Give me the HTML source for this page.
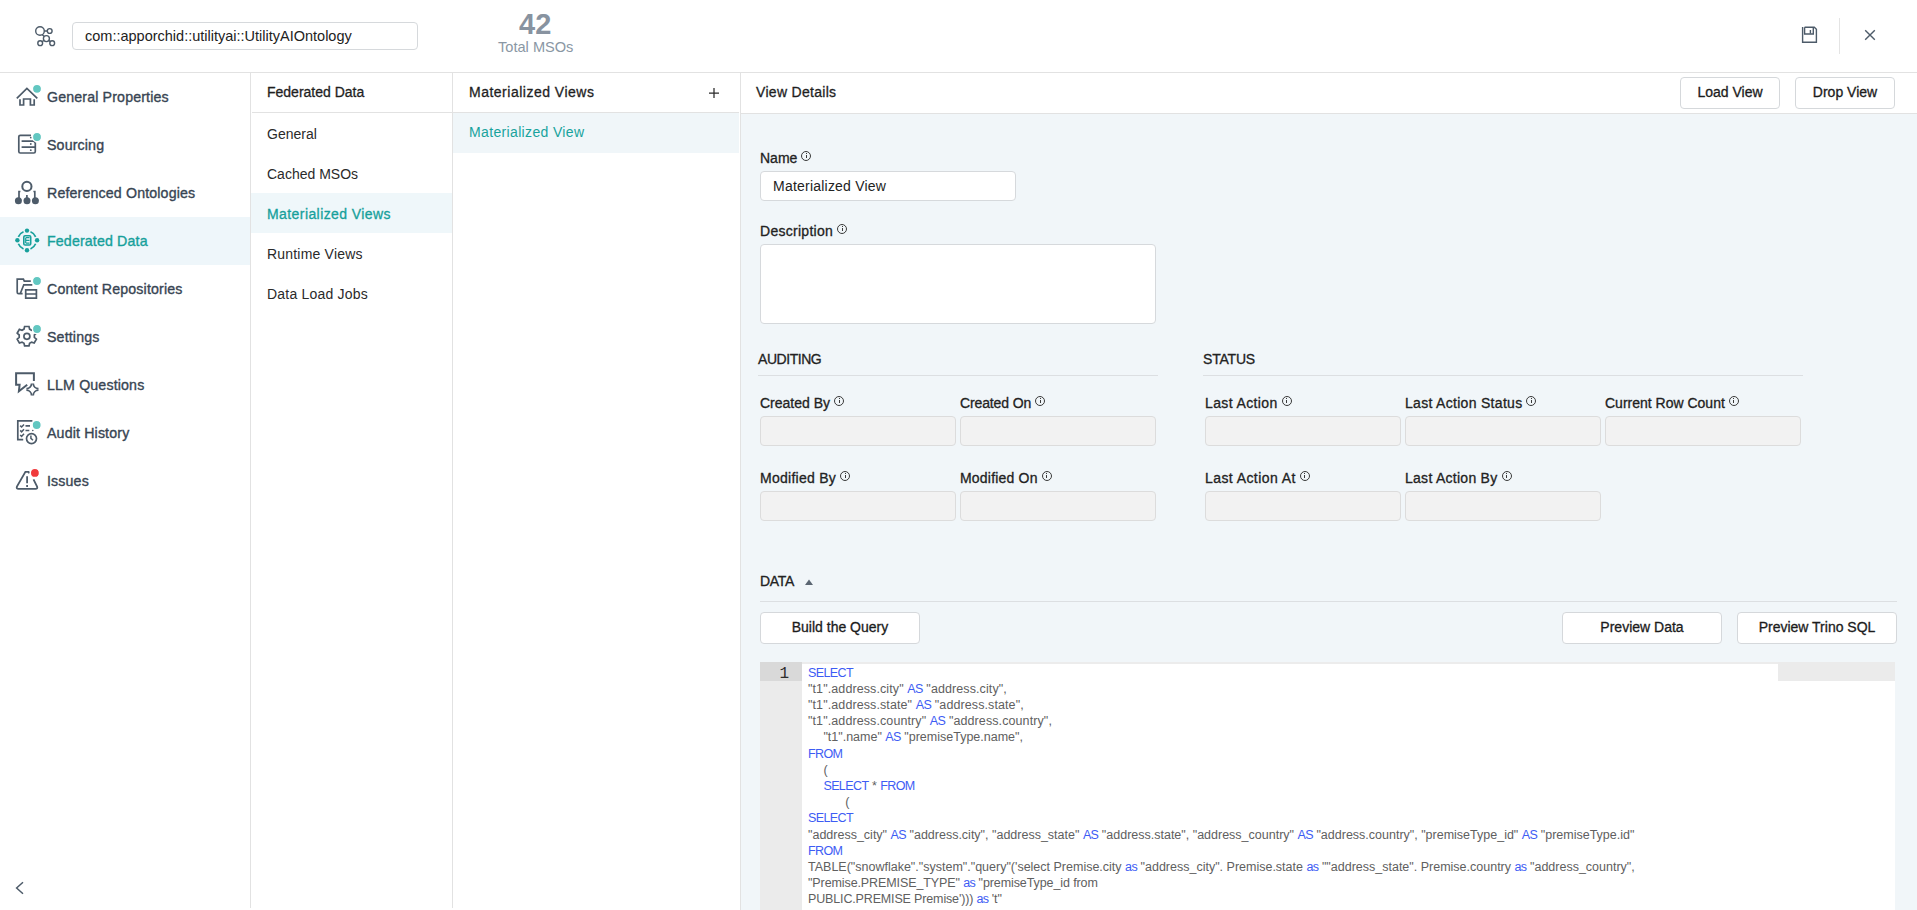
<!DOCTYPE html>
<html><head><meta charset="utf-8">
<style>
html,body{margin:0;padding:0;width:1917px;height:910px;overflow:hidden;background:#fff;font-family:"Liberation Sans",sans-serif;}
.a{position:absolute;}
.t{position:absolute;white-space:nowrap;line-height:20px;font-size:14px;}
.hl{position:absolute;height:1px;background:#e2e2e2;}
.vl{position:absolute;width:1px;background:#e2e2e2;}
.sb{letter-spacing:0.15px;color:#384553;-webkit-text-stroke:0.35px #384553;}
.c2{color:#2a2a2a;}
.hd{color:#1f1f1f;-webkit-text-stroke:0.3px #1f1f1f;}
.lbl{color:#222;-webkit-text-stroke:0.3px #222;}
.inp{position:absolute;box-sizing:border-box;border:1px solid #d6d9dc;border-radius:4px;background:#fff;}
.dis{position:absolute;box-sizing:border-box;border:1px solid #dcdcdc;border-radius:4px;background:#f2f2f2;height:30px;width:196px;}
.btn{position:absolute;box-sizing:border-box;border:1px solid #d5d8db;border-radius:4px;background:#fff;height:32px;text-align:center;line-height:29px;font-size:14px;color:#1c1c1c;-webkit-text-stroke:0.3px #1c1c1c;}
.info{display:inline-block;position:relative;width:8px;height:8px;border:1px solid #3a3a3a;border-radius:50%;margin-left:4px;top:-2.5px;-webkit-text-stroke:0;}
.info:after{content:"";position:absolute;left:3.5px;top:3.2px;width:1px;height:3.3px;background:#3a3a3a;}
.info:before{content:"";position:absolute;left:3.5px;top:1.5px;width:1px;height:1px;background:#3a3a3a;}
.code{font-size:12.5px;line-height:16.21px;color:#606060;}
.code div{white-space:pre;height:16.21px;}
.code b{font-weight:normal;color:#3d5cf4;letter-spacing:-0.6px;}
</style></head><body>

<!-- HEADER -->
<svg class="a" style="left:30px;top:22px" width="30" height="30" viewBox="30 22 30 30">
 <g fill="none" stroke="#4d5b69" stroke-width="1.4">
  <circle cx="40" cy="31" r="4.3"/>
  <circle cx="49.7" cy="31" r="2.4"/>
  <circle cx="46.4" cy="38.6" r="3"/>
  <circle cx="40.2" cy="43.2" r="2.4"/>
  <circle cx="52.2" cy="43.2" r="2.4"/>
  <path d="M44.3 31H47.3M42.3 34.8L44.3 36.6M44 40.5L42 41.7M48.7 40.4L50.4 41.6"/>
 </g>
</svg>
<div class="inp" style="left:72px;top:22px;width:346px;height:28px;"></div>
<div class="t" style="left:85px;top:26px;font-size:14.5px;color:#222;">com::apporchid::utilityai::UtilityAIOntology</div>
<div class="t" style="left:519px;top:8px;font-size:29px;line-height:32px;font-weight:bold;color:#8893a0;">42</div>
<div class="t" style="left:498px;top:37px;font-size:14.6px;color:#8a97a4;">Total MSOs</div>
<svg class="a" style="left:1799px;top:25px" width="20" height="20" viewBox="0 0 20 20">
 <g fill="none" stroke="#4d5b69" stroke-width="1.4">
  <path d="M3.6 2V17.3H17.4V4.3L15.3 2.2H5.6"/>
  <path d="M5.6 2.2V9H14.3V2.2"/>
  <path d="M11.4 5V8.6"/>
 </g>
</svg>
<div class="vl" style="left:1839px;top:18px;height:36px;background:#e4e4e4;"></div>
<svg class="a" style="left:1862px;top:27px" width="16" height="16" viewBox="0 0 16 16">
 <path d="M3.2 3.2L12.8 12.8M12.8 3.2L3.2 12.8" stroke="#4d5b69" stroke-width="1.4" fill="none"/>
</svg>
<div class="hl" style="left:0;top:72px;width:1917px;"></div>

<!-- SIDEBAR -->
<div class="a" style="left:0;top:217px;width:250px;height:48px;background:#eef6fa;"></div>
<svg class="a" style="left:0;top:73px" width="250" height="837" viewBox="0 73 250 837">
 <g fill="none" stroke="#4d5b69" stroke-width="1.7" stroke-linejoin="miter">
  <!-- house -->
  <path d="M16.8 98.3L26.9 88.4L37.3 98.3"/>
  <path d="M20 99.3V105H23.6V99H30.4V105H34.2V99.3"/>
  <!-- sourcing -->
  <path d="M31 135.3H20.3Q18.8 135.3 18.8 136.8V151.5Q18.8 153 20.3 153H33.8Q35.3 153 35.3 151.5V142.5"/>
  <path d="M21.6 141.1H33.5L35.3 142.5M21.6 147.2H35.3"/>
  <!-- ref ontologies -->
  <circle cx="26.9" cy="186.4" r="4.6" stroke-width="2"/>
  <path d="M20.4 191.5H19V198.2M33.4 191.5H34.8V198.2M26.9 195V198.2"/>
  <!-- content repos -->
  <path d="M22.6 293.7H18.6Q17.2 293.7 17.2 292.3V279.2H23.4L24.3 281.2H30.8"/>
  <path d="M32.3 284.8H23.8L20.3 293.5"/>
  <path d="M25.7 289.8H36.4V298.1H25.7ZM25.7 294H36.4"/>
  <!-- settings gear -->
  <path d="M24.6 326.5h4.4l0.6 2.6 2 1.2 2.6-0.9 2.2 3.8-2 1.8v2.4l2 1.8-2.2 3.8-2.6-0.9-2 1.2-0.6 2.6h-4.4l-0.6-2.6-2-1.2-2.6 0.9-2.2-3.8 2-1.8v-2.4l-2-1.8 2.2-3.8 2.6 0.9 2-1.2z"/>
  <circle cx="26.9" cy="336.3" r="3"/>
  <!-- llm -->
  <path d="M33.9 381V373.3H16.1V384.8H19.6L18.9 391.2L27.2 384.8" stroke-width="2"/>
  <path d="M26.4 388.6A5.4 5.4 0 0 0 31.6 383.5M33.2 383.5A5.4 5.4 0 0 0 38.5 388.6M38.5 390.2A5.4 5.4 0 0 0 33.2 395.5M31.6 395.5A5.4 5.4 0 0 0 26.4 390.2" stroke-width="1.8"/>
  <!-- audit -->
  <path d="M23.2 439.7H17.8V420.9H32.4"/>
  <path d="M20.2 425.6l1.4 1.4 2.4-2.6M20.2 430.4l1.4 1.4 2.4-2.6M20.2 435l1.4 1.4 2.4-2.6" stroke-width="1.5"/>
  <path d="M25.5 425.9H30M25.5 430.5H29.3" stroke-width="1.6"/>
  <circle cx="31.5" cy="438.6" r="5"/>
  <path d="M30.9 435.6V438.4L33 440.3" stroke-width="1.5"/>
  <!-- issues -->
  <path d="M29.2 473.3L28.6 471.8H25.4L16.9 486.6Q16.1 488.8 18.4 488.8H35.6Q37.9 488.8 37.1 486.6L33.5 479.3" stroke-width="1.8"/>
  <path d="M27.1 476.2V483.2M27.1 485.1V487" stroke-width="1.8"/>
  <!-- collapse -->
  <path d="M23 882.2L16.6 888L23 893.8" stroke-width="1.5"/>
 </g>
 <g fill="#4d5b69">
  <circle cx="30.8" cy="137.6" r="0.9"/><circle cx="30.8" cy="144" r="0.9"/><circle cx="30.8" cy="150.2" r="0.9"/>
  <circle cx="32.8" cy="430.5" r="0.8"/>
  <circle cx="18.4" cy="200.7" r="3.5"/><circle cx="27" cy="200.7" r="3.5"/><circle cx="35.4" cy="200.7" r="3.5"/>
 </g>
 <!-- federated data (teal) -->
 <g fill="none" stroke="#17a09b" stroke-width="1.7">
  <path d="M35.62 243.78A9.3 9.3 0 0 1 30.48 248.92M23.52 248.92A9.3 9.3 0 0 1 18.38 243.78M18.38 236.82A9.3 9.3 0 0 1 23.52 231.68M30.48 231.68A9.3 9.3 0 0 1 35.62 236.82"/>
  <rect x="23.8" y="235.8" width="6.9" height="9.2" rx="1.3" stroke-width="1.6"/>
  <path d="M25.7 237.7V243.1M25.7 237.7H29.5M25.7 240.4H29.5M25.7 243.1H29.5" stroke-width="1.2"/>
 </g>
 <g fill="#17a09b">
  <circle cx="27" cy="230.6" r="2.2"/><circle cx="37.1" cy="240.3" r="2.2"/><circle cx="27" cy="250.2" r="2.2"/><circle cx="17.4" cy="240.3" r="2.2"/>
 </g>
 <g fill="#62c7c1" stroke="#fff" stroke-width="1.4">
  <circle cx="37" cy="88.8" r="4.6"/><circle cx="37" cy="137" r="4.6"/><circle cx="37" cy="281" r="4.6"/><circle cx="37" cy="329" r="4.6"/><circle cx="36.7" cy="425" r="4.6"/>
 </g>
 <circle cx="34.9" cy="472.9" r="4.6" fill="#f03a3c" stroke="#fff" stroke-width="1.4"/>
</svg>
<div class="t sb" style="left:47px;top:87px;font-size:14.2px;">General Properties</div>
<div class="t sb" style="left:47px;top:135px;font-size:14.2px;">Sourcing</div>
<div class="t sb" style="left:47px;top:183px;font-size:14.2px;">Referenced Ontologies</div>
<div class="t sb" style="left:47px;top:231px;font-size:14.2px;color:#16a09b;-webkit-text-stroke-color:#16a09b;">Federated Data</div>
<div class="t sb" style="left:47px;top:279px;font-size:14.2px;">Content Repositories</div>
<div class="t sb" style="left:47px;top:327px;font-size:14.2px;">Settings</div>
<div class="t sb" style="left:47px;top:375px;font-size:14.2px;">LLM Questions</div>
<div class="t sb" style="left:47px;top:423px;font-size:14.2px;">Audit History</div>
<div class="t sb" style="left:47px;top:471px;font-size:14.2px;">Issues</div>
<div class="vl" style="left:250px;top:73px;height:835px;"></div>

<!-- COLUMN 2 -->
<div class="hl" style="left:252px;top:112px;width:200px;"></div>
<div class="a" style="left:251px;top:193px;width:201px;height:40px;background:#eff7fa;"></div>
<div class="t hd" style="left:267px;top:82px;">Federated Data</div>
<div class="t c2" style="left:267px;top:124px;">General</div>
<div class="t c2" style="left:267px;top:164px;">Cached MSOs</div>
<div class="t hd" style="left:267px;top:204px;letter-spacing:0.42px;color:#16a09b;-webkit-text-stroke-color:#16a09b;">Materialized Views</div>
<div class="t c2" style="left:267px;top:244px;letter-spacing:0.2px;">Runtime Views</div>
<div class="t c2" style="left:267px;top:284px;letter-spacing:0.2px;">Data Load Jobs</div>
<div class="vl" style="left:452px;top:73px;height:835px;"></div>

<!-- COLUMN 3 -->
<div class="hl" style="left:453px;top:112px;width:286px;"></div>
<div class="a" style="left:453px;top:113px;width:286px;height:40px;background:#f0f6f9;"></div>
<div class="t hd" style="left:469px;top:82px;letter-spacing:0.5px;">Materialized Views</div>
<svg class="a" style="left:706px;top:85px" width="16" height="16" viewBox="0 0 16 16"><path d="M8 3V13M3 8H13" stroke="#2a2a2a" stroke-width="1.25"/></svg>
<div class="t" style="left:469px;top:122px;letter-spacing:0.35px;color:#18a39d;">Materialized View</div>
<div class="vl" style="left:740px;top:73px;height:837px;"></div>

<!-- DETAIL -->
<div class="a" style="left:741px;top:114px;width:1176px;height:796px;background:#f1f6f9;"></div>
<div class="hl" style="left:741px;top:113px;width:1176px;"></div>
<div class="t hd" style="left:756px;top:82px;letter-spacing:0.3px;">View Details</div>
<div class="btn" style="left:1680px;top:77px;width:100px;">Load View</div>
<div class="btn" style="left:1795px;top:77px;width:100px;">Drop View</div>

<div class="t lbl" style="left:760px;top:148px;">Name<i class="info"></i></div>
<div class="inp" style="left:760px;top:171px;width:256px;height:30px;"></div>
<div class="t" style="left:773px;top:176px;color:#222;letter-spacing:0.22px;">Materialized View</div>
<div class="t lbl" style="left:760px;top:221px;letter-spacing:0.28px;">Description<i class="info"></i></div>
<div class="inp" style="left:760px;top:244px;width:396px;height:80px;"></div>

<div class="t" style="left:758px;top:349px;color:#222;-webkit-text-stroke:0.3px #222;letter-spacing:-0.45px;">AUDITING</div>
<div class="hl" style="left:758px;top:375px;width:400px;background:#dcdfe2;"></div>
<div class="t" style="left:1203px;top:349px;color:#222;-webkit-text-stroke:0.3px #222;letter-spacing:-0.2px;">STATUS</div>
<div class="hl" style="left:1203px;top:375px;width:600px;background:#dcdfe2;"></div>

<div class="t lbl" style="left:760px;top:393px;">Created By<i class="info"></i></div>
<div class="t lbl" style="left:960px;top:393px;letter-spacing:-0.13px;">Created On<i class="info"></i></div>
<div class="t lbl" style="left:1205px;top:393px;letter-spacing:0.38px;">Last Action<i class="info"></i></div>
<div class="t lbl" style="left:1405px;top:393px;letter-spacing:0.3px;">Last Action Status<i class="info"></i></div>
<div class="t lbl" style="left:1605px;top:393px;">Current Row Count<i class="info"></i></div>
<div class="dis" style="left:760px;top:416px;"></div>
<div class="dis" style="left:960px;top:416px;"></div>
<div class="dis" style="left:1205px;top:416px;"></div>
<div class="dis" style="left:1405px;top:416px;"></div>
<div class="dis" style="left:1605px;top:416px;"></div>

<div class="t lbl" style="left:760px;top:468px;letter-spacing:0.27px;">Modified By<i class="info"></i></div>
<div class="t lbl" style="left:960px;top:468px;letter-spacing:0.2px;">Modified On<i class="info"></i></div>
<div class="t lbl" style="left:1205px;top:468px;letter-spacing:0.42px;">Last Action At<i class="info"></i></div>
<div class="t lbl" style="left:1405px;top:468px;letter-spacing:0.27px;">Last Action By<i class="info"></i></div>
<div class="dis" style="left:760px;top:491px;"></div>
<div class="dis" style="left:960px;top:491px;"></div>
<div class="dis" style="left:1205px;top:491px;"></div>
<div class="dis" style="left:1405px;top:491px;"></div>

<div class="t" style="left:760px;top:571px;color:#222;-webkit-text-stroke:0.3px #222;letter-spacing:-0.3px;">DATA</div>
<svg class="a" style="left:803px;top:577px" width="12" height="10" viewBox="0 0 12 10"><path d="M2 8L6 2.5L10 8Z" fill="#5b6672"/></svg>
<div class="hl" style="left:760px;top:601px;width:1137px;background:#dcdfe2;"></div>
<div class="btn" style="left:760px;top:612px;width:160px;">Build the Query</div>
<div class="btn" style="left:1562px;top:612px;width:160px;">Preview Data</div>
<div class="btn" style="left:1737px;top:612px;width:160px;">Preview Trino SQL</div>

<!-- EDITOR -->
<div class="a" style="left:760px;top:662px;width:1135px;height:248px;background:#fff;"></div>
<div class="a" style="left:760px;top:662px;width:42px;height:248px;background:#ebebeb;"></div>
<div class="a" style="left:760px;top:662px;width:42px;height:19px;background:#d9d9d9;"></div>
<div class="a" style="left:802px;top:662px;width:976px;height:2px;background:#ececec;"></div>
<div class="a" style="left:1778px;top:662px;width:117px;height:19px;background:#ebebeb;"></div>
<div class="a" style="left:760px;top:665px;width:29px;text-align:right;font-family:'Liberation Mono',monospace;font-size:16px;line-height:18px;color:#2d2d2d;">1</div>
<div class="a code" style="left:808px;top:664.5px;">
<div><b>SELECT</b></div>
<div style="letter-spacing:0.1px">"t1".address.city" <b>AS</b> "address.city",</div>
<div style="letter-spacing:0.1px">"t1".address.state" <b>AS</b> "address.state",</div>
<div style="letter-spacing:0.1px">"t1".address.country" <b>AS</b> "address.country",</div>
<div style="padding-left:15.4px">"t1".name" <b>AS</b> "premiseType.name",</div>
<div><b>FROM</b></div>
<div style="padding-left:15.4px">(</div>
<div style="padding-left:15.4px"><b>SELECT</b> * <b>FROM</b></div>
<div style="padding-left:37.3px">(</div>
<div><b>SELECT</b></div>
<div>"address_city" <b>AS</b> "address.city", "address_state" <b>AS</b> "address.state", "address_country" <b>AS</b> "address.country", "premiseType_id" <b>AS</b> "premiseType.id"</div>
<div><b>FROM</b></div>
<div>TABLE("snowflake"."system"."query"('select Premise.city <b>as</b> "address_city". Premise.state <b>as</b> ""address_state". Premise.country <b>as</b> "address_country",</div>
<div style="letter-spacing:-0.1px">"Premise.PREMISE_TYPE" <b>as</b> "premiseType_id from</div>
<div style="letter-spacing:-0.15px">PUBLIC.PREMISE Premise'))) <b>as</b> 't"</div>
</div>

</body></html>
